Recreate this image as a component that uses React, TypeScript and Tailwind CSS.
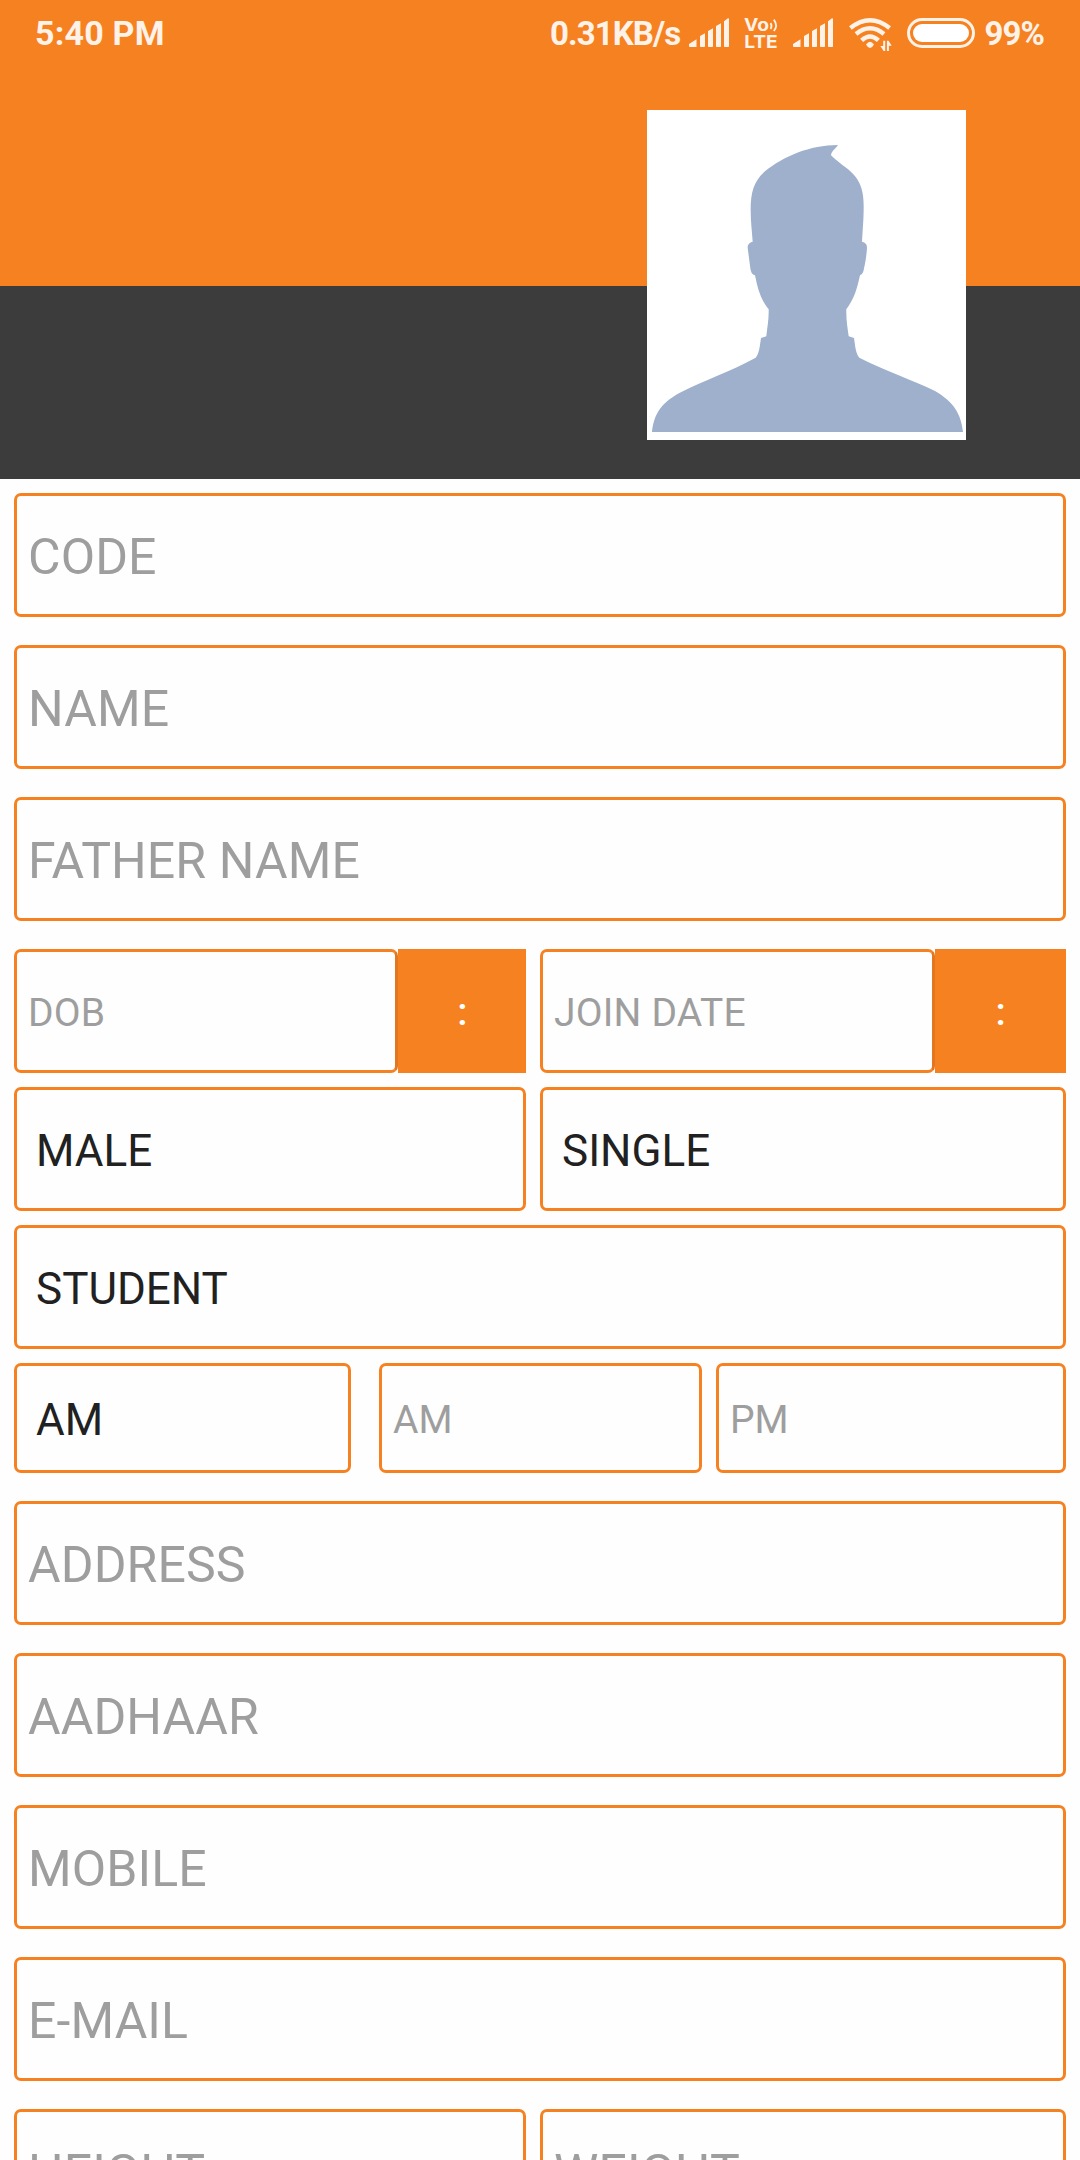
import { clsx } from "clsx";
import { ReactNode } from "react";

const SignalIcon = ({ className }: { className?: string }) => (
  <svg
    viewBox="0 0 40 29"
    className={clsx("-mt-px h-[29px] w-10 shrink-0", className)}
    fill="currentColor"
  >
    <path d="M7.5 21.2V29H.8a.8.8 0 0 1-.8-.8v-2.1zM11 18l5-2.8V28.2a.8.8 0 0 1-.8.8h-3.4a.8.8 0 0 1-.8-.8zM19 13l5-2.8V28.2a.8.8 0 0 1-.8.8h-3.4a.8.8 0 0 1-.8-.8zM27 8l5-2.8V28.2a.8.8 0 0 1-.8.8h-3.4a.8.8 0 0 1-.8-.8zM35 3.2L38.6.4Q40-.3 40 1V28.2a.8.8 0 0 1-.8.8h-3.4a.8.8 0 0 1-.8-.8z" />
  </svg>
);

const VolteIcon = () => (
  <svg
    viewBox="0 0 34 30"
    className="ml-[15px] h-[30px] w-[34px] shrink-0 overflow-visible font-['Inter',sans-serif] font-bold"
    fill="currentColor"
  >
    <text x="0" y="12.8" fontSize="17.5" textLength="25" lengthAdjust="spacingAndGlyphs">
      Vo
    </text>
    <text x="0.2" y="29.8" fontSize="17.5" textLength="33.5" lengthAdjust="spacingAndGlyphs">
      LTE
    </text>
    <path
      d="M26.6 5q1.8 3 0 6M29.8 1.6q4.6 6.2 0 11.4"
      fill="none"
      stroke="currentColor"
      strokeWidth="1.8"
    />
  </svg>
);

const WifiIcon = () => (
  <svg
    viewBox="0 0 43 30"
    className="ml-4 h-[30px] w-[43px] shrink-0 overflow-visible"
    fill="none"
    stroke="currentColor"
    strokeWidth="4.4"
  >
    <path d="M1.4 10Q21 -5.6 40.6 10" />
    <path d="M7 16Q21 4.6 35 16" />
    <path d="M12.6 22.4Q21 14.6 29.4 22.4" />
    <path
      d="M17 26.4Q21 21.2 25 26.4Q24 28.6 21 30Q18 28.6 17 26.4z"
      fill="currentColor"
      stroke="none"
    />
    <path
      d="M36.2 22.7V33H34.6L31.4 28H34.2V22.7zM37.9 33V22.7H39.5L42.7 27.8H39.9V33z"
      fill="currentColor"
      stroke="none"
    />
  </svg>
);

const StatusBar = () => (
  <div className="flex h-[66px] items-center pl-[35px] pr-[36px] text-[#fff2e8]">
    <span className="text-[34px] font-bold leading-none tracking-[0.2px]">5:40 PM</span>
    <div className="ml-auto flex items-center">
      <span className="text-[33px] font-bold leading-none tracking-[-0.9px]">0.31KB/s</span>
      <SignalIcon className="ml-[9px]" />
      <VolteIcon />
      <SignalIcon className="ml-[15px]" />
      <WifiIcon />
      <div className="ml-[15px] h-[30px] w-[68px] shrink-0 rounded-full border-[3px] border-current p-[3px]">
        <div className="h-full rounded-full bg-white" />
      </div>
      <span className="ml-[9px] text-[33px] font-bold leading-none tracking-[-0.9px]">99%</span>
    </div>
  </div>
);

const Avatar = () => (
  <svg viewBox="51 45 957 990" className="h-[330px] w-[319px] bg-white">
    <path
      fill="#9eb0cc"
      d="M624 150C540 150 460 184 405 229C372 258 362 290 362 345C362 380 366 410 368 440C358 443 352 448 353 458L361 520C363 532 367 540 375 541C384 585 392 612 416 643C417 675 411 700 409 724L393 729C389 755 388 775 377 788C300 830 220 857 160 888C95 920 72 955 66 1011H999C993 955 970 920 915 888C850 855 770 830 688 788C677 775 676 755 672 729L656 724C653 700 648 675 649 643C673 610 680 585 690 541C698 538 701 530 702 520C707 500 710 475 711 458C711 447 706 442 696 440C698 400 701 375 701 335C701 290 692 262 670 238C650 216 620 200 603 181C604 168 616 162 624 150z"
    />
  </svg>
);

const Header = () => (
  <header className="h-[479px] bg-[linear-gradient(#f68121_286px,#3c3c3c_286px)]">
    <StatusBar />
    <div className="mt-11 flex justify-end pr-[114px]">
      <Avatar />
    </div>
  </header>
);

const Field = ({
  children,
  className,
}: {
  children: ReactNode;
  className?: string;
}) => (
  <div
    className={clsx(
      "flex shrink-0 items-center rounded-[7px] border-[3px] border-[#f68121] pt-1",
      className
    )}
  >
    {children}
  </div>
);

const TextField = ({ label, className }: { label: string; className?: string }) => (
  <Field
    className={clsx(
      "h-[124px] pl-[11px] text-[50px] tracking-[0.1px] text-[#9e9e9e]",
      className
    )}
  >
    {label}
  </Field>
);

const SelectField = ({ value, className }: { value: string; className?: string }) => (
  <Field className={clsx("pl-[19px] text-[44px] text-[#212121]", className)}>
    {value}
  </Field>
);

const DateField = ({ label, className }: { label: string; className?: string }) => (
  <div className={clsx("flex h-[124px]", className)}>
    <Field className="w-3/4 border-r-[#e2771f] pl-[11px] text-[39px] tracking-[0.2px] text-[#9e9e9e]">
      {label}
    </Field>
    <button className="flex flex-1 items-center justify-center bg-[#f68121] pl-px pt-[3px] text-[39px] font-medium text-white">
      :
    </button>
  </div>
);

export default function App() {
  return (
    <div className="h-[2160px] w-[1080px] overflow-hidden bg-[#fefefe] font-['Roboto',sans-serif] leading-none">
      <Header />

      <main className="flex flex-col px-[14px] pt-[14px]">
        <div className="flex flex-col gap-7">
          <TextField label="CODE" />
          <TextField label="NAME" />
          <TextField label="FATHER NAME" />
        </div>

        <div className="mt-7 flex flex-col gap-[14px]">
          <div className="flex gap-[14px]">
            <DateField label="DOB" className="w-[512px]" />
            <DateField label="JOIN DATE" className="w-[526px]" />
          </div>
          <div className="flex gap-[14px]">
            <SelectField value="MALE" className="h-[124px] w-[512px]" />
            <SelectField value="SINGLE" className="h-[124px] w-[526px]" />
          </div>
          <SelectField value="STUDENT" className="h-[124px]" />
          <div className="flex h-[110px]">
            <SelectField value="AM" className="w-[337px]" />
            <Field className="ml-7 w-[323px] pl-[11px] text-[39px] text-[#9e9e9e]">AM</Field>
            <Field className="ml-[14px] w-[350px] pl-[11px] text-[39px] text-[#9e9e9e]">PM</Field>
          </div>
        </div>

        <div className="mt-7 flex flex-col gap-7">
          <TextField label="ADDRESS" />
          <TextField label="AADHAAR" />
          <TextField label="MOBILE" />
          <TextField label="E-MAIL" />
          <div className="flex gap-[14px]">
            <TextField label="HEIGHT" className="w-[512px]" />
            <TextField label="WEIGHT" className="w-[526px]" />
          </div>
        </div>
      </main>
    </div>
  );
}
